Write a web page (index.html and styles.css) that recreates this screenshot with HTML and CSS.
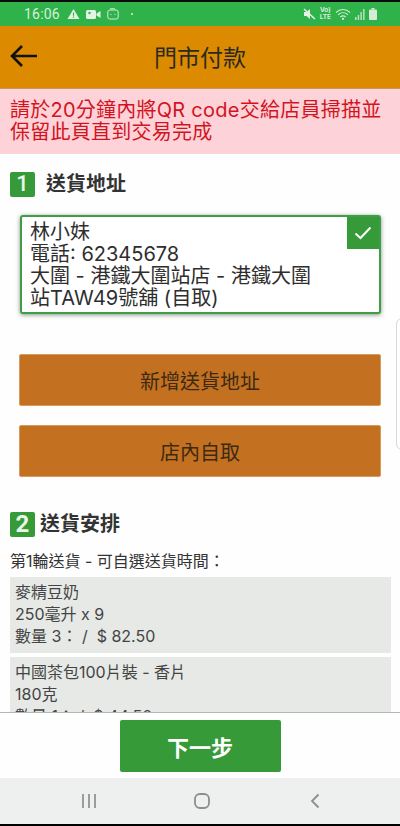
FILE: index.html
```html
<!DOCTYPE html>
<html lang="zh-Hant">
<head>
<meta charset="utf-8">
<title>門市付款</title>
<link rel="stylesheet" href="styles.css">
</head>
<body>
<div class="phone">
  <div class="status">
    <div class="status-left">
      <span class="clock">16:06</span>
      <svg class="ic" width="13" height="12" viewBox="0 0 13 12"><path d="M6.5 1 12.500 11H.5Z" fill="#e4f3e4"/><path d="M6.500 4.500v3.200M6.500 8.600v1.100" stroke="#2fb24a" stroke-width="1.200"/></svg>
      <svg class="ic" width="15" height="11" viewBox="0 0 15 11"><rect x="0" y="1" width="10" height="9" rx="1.500" fill="#e4f3e4"/><path d="M10.500 4.500 14.500 2v7l-4-2.500Z" fill="#e4f3e4"/><circle cx="3.500" cy="4" r="1.200" fill="#2fb24a"/></svg>
      <svg class="ic" width="12" height="12" viewBox="0 0 12 12" fill="none" stroke="#d5ecd7"><rect x=".8" y="2" width="10.400" height="9" rx="2"/><path d="M4 6v1M8 6v1M3 .8h5"/></svg>
      <span class="dot"></span>
    </div>
    <div class="status-right">
      <svg width="13" height="12" viewBox="0 0 13 12"><path d="M1 4h2.500L7 1v10L3.500 8H1Z" fill="#e4f3e4"/><path d="M1 1l11 10" stroke="#e4f3e4" stroke-width="1.500"/></svg>
      <span class="volte">Vo)<br>LTE</span>
      <svg width="16" height="12" viewBox="0 0 16 12" fill="none" stroke="#d5ecd7" stroke-width="1.100"><path d="M1 4.500C5 .5 11 .5 15 4.500M3 6.800c3-2.800 7-2.800 10 0M5.300 9c1.500-1.300 3.900-1.300 5.400 0"/><circle cx="8" cy="10.800" r=".6" fill="#d5ecd7"/></svg>
      <svg width="10" height="11" viewBox="0 0 10 11" fill="#b9e2bf"><rect x="0" y="8" width="1.500" height="3"/><rect x="2.700" y="6" width="1.500" height="5"/><rect x="5.400" y="3" width="1.500" height="8"/><rect x="8.100" y="0" width="1.500" height="11"/></svg>
      <svg width="8" height="12" viewBox="0 0 8 12"><rect x="2.500" y="0" width="3" height="1.500" fill="#d5ecd7"/><rect x="0" y="1.500" width="8" height="10.500" rx="1" fill="#d5ecd7"/></svg>
    </div>
  </div>

  <header class="topbar">
    <svg class="back" width="28" height="24" viewBox="0 0 28 24" fill="none" stroke="#111" stroke-width="2.600"><path d="M27 12H2M12 2 2 12l10 10"/></svg>
    <h1 class="title">門市付款</h1>
  </header>

  <div class="notice">請於20分鐘內將QR code交給店員掃描並保留此頁直到交易完成</div>

  <main class="content">
    <section class="step-one">
      <h2 class="step-head"><span class="badge">1</span><span class="step-title">送貨地址</span></h2>
      <div class="address">
        林小妹<br>電話: 62345678<br>大圍 - 港鐵大圍站店 - 港鐵大圍站TAW49號舖 (自取)
        <span class="tick"><svg width="18" height="14" viewBox="0 0 18 14" fill="none" stroke="#fff" stroke-width="2"><path d="M1.500 7.500 6.500 12 16.500 1.500"/></svg></span>
      </div>
      <button class="action first">新增送貨地址</button>
      <button class="action">店內自取</button>
    </section>

    <section class="step-two">
      <h2 class="step-head tight"><span class="badge">2</span><span class="step-title">送貨安排</span></h2>
      <p class="round">第1輪送貨 - 可自選送貨時間：</p>
      <div class="item">麥精豆奶<br>250毫升 x 9<br>數量 3： /&nbsp; $ 82.50</div>
      <div class="item">中國茶包100片裝 - 香片<br>180克<br>數量 1： /&nbsp; $ 44.50</div>
    </section>
    <span class="side-handle"></span>
  </main>

  <footer class="footer"><button class="next">下一步</button></footer>

  <nav class="navbar">
    <svg width="16" height="14" viewBox="0 0 16 14" fill="none" stroke="#8a8f8d" stroke-width="1.700"><path d="M2 0v14M8 0v14M14 0v14"/></svg>
    <svg width="16" height="16" viewBox="0 0 16 16" fill="none" stroke="#8a8f8d" stroke-width="1.800"><rect x="1" y="1" width="14" height="14" rx="5"/></svg>
    <svg class="nav-back" width="10" height="16" viewBox="0 0 10 16" fill="none" stroke="#8a8f8d" stroke-width="1.800"><path d="M8.500 1.500 2 8l6.500 6.500"/></svg>
  </nav>
</div>
</body>
</html>
```

FILE: styles.css
```css
* { box-sizing: border-box; }
html, body { margin: 0; padding: 0; }
body { width: 400px; height: 826px; overflow: hidden; background: #000; font-family: Inter, "Noto Sans CJK TC", sans-serif; color: #2c2c2c; }
.phone { width: 400px; height: 826px; display: flex; flex-direction: column; border-top: 2px solid #0b0b0b; border-bottom: 2px solid #000; background: #fefefe; }

.status { flex: 0 0 24px; background: #2fb24a; display: flex; justify-content: space-between; align-items: center; padding: 0 23px 0 24px; color: #d9efdc; }
.status-left, .status-right { display: flex; align-items: center; }
.clock { font-family: Roboto, sans-serif; font-size: 14px; margin-right: 7px; letter-spacing: .2px; }
.ic { margin-right: 6px; }
.dot { width: 2px; height: 2px; border-radius: 50%; background: #d9efdc; margin-left: 6px; }
.status-right { gap: 4px; }
.volte { font-size: 6.500px; line-height: 7px; font-weight: 700; text-align: center; }

.topbar { flex: 0 0 63px; background: #dc8a00; display: flex; align-items: center; justify-content: center; position: relative; border-bottom: 1px solid #c99a55; }
.back { position: absolute; left: 10px; top: 18px; }
.title { margin: 0 0 3px; font-size: 23px; font-weight: 400; color: #2a2a22; }

.notice { flex: 0 0 65px; background: #fdd2d8; color: #d2141e; font-size: 20px; letter-spacing: .25px; line-height: 22px; padding: 10px 10px 0; }

.content { flex: 1 1 auto; overflow: hidden; position: relative; padding: 0; border-bottom: 1px solid #b5b5b5; }
.step-one { padding: 17px 10px 0; }
.step-head { margin: 0; display: flex; align-items: center; font-size: 20px; font-weight: 700; line-height: 26px; color: #333; }
.badge { width: 25px; height: 25px; background: #359a37; color: #e9f6ea; border-radius: 2px; font-size: 22px; font-weight: 500; display: flex; align-items: center; justify-content: center; margin-right: 11px; font-family: Roboto, sans-serif; }
.tight .badge { margin-right: 5px; font-weight: 700; font-size: 24px; }

.address { position: relative; margin: 18px 9px 0 10px; height: 99px; background: #fff; border: 2px solid #3f9d45; border-radius: 3px; box-shadow: 0 1px 4px rgba(30,60,30,.55); padding: 4px 60px 0 8px; font-size: 20px; line-height: 22px; color: #2e2e2e; }
.tick { position: absolute; top: 0; right: 0; width: 32px; height: 32px; background: #359a37; display: flex; align-items: center; justify-content: center; }

.action { display: block; width: 362px; height: 52px; margin: 19px 0 0 9px; background: #c37121; border: 1px solid #d79a5d; border-radius: 2px; font: inherit; font-size: 20px; color: #3d2a12; }
.action.first { margin-top: 40px; }

.step-two { padding: 34px 10px 0; }
.step-head.tight { line-height: 26px; }
.round { margin: 13px 0 0; font-size: 16px; line-height: 22px; color: #333; }
.item { margin: 5px -1px 0 0; width: 381px; background: #e6e9e6; padding: 4px 5px 0; height: 76px; font-size: 16px; line-height: 22px; color: #444; }
.item + .item { margin-top: 4px; }
.side-handle { position: absolute; right: -8px; top: 164px; width: 12px; height: 132px; border: 1px solid #d8d8d8; border-radius: 6px; }

.footer { flex: 0 0 65px; background: #fefefe; display: flex; justify-content: center; align-items: flex-start; padding-top: 7px; }
.next { width: 161px; height: 52px; background: #359a37; border: 0; border-radius: 2px; color: #fff; font: inherit; font-size: 22px; font-weight: 700; }

.navbar { flex: 0 0 46px; background: #edf0ee; display: flex; align-items: center; gap: 97px; padding-left: 81px; }
.nav-back { margin-left: 3px; }
```
